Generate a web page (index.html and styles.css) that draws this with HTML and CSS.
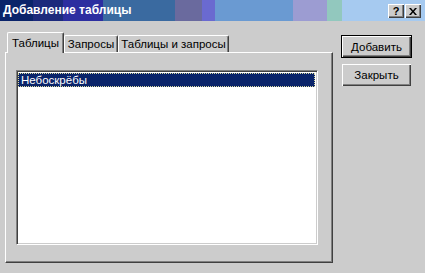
FILE: index.html
```html
<!DOCTYPE html>
<html lang="ru">
<head>
    <meta charset="UTF-8">
    <title>Добавление таблицы</title>
    <link rel="stylesheet" href="styles.css">
</head>
<body>
    <div class="window">
        <div class="titlebar">
            <span class="title">Добавление таблицы</span>
            <div class="caption-buttons">
                <span class="cap-btn help">?</span>
                <span class="cap-btn close">
                    <svg width="8" height="7" viewBox="0 0 8 7">
                        <path d="M0 0h2l2 2.5L6 0h2L5 3.5 8 7H6L4 4.5 2 7H0l3-3.5z" fill="#000"/>
                    </svg>
                </span>
            </div>
        </div>
        <div class="client">
            <div class="tabctl">
                <div class="tabs">
                    <div class="tab selected">Таблицы</div>
                    <div class="tab t2">Запросы</div>
                    <div class="tab t3">Таблицы и запросы</div>
                </div>
                <div class="panel">
                    <div class="listbox">
                        <div class="item focused">Небоскрёбы</div>
                    </div>
                </div>
            </div>
            <div class="actions">
                <button class="btn default">Добавить</button>
                <button class="btn secondary">Закрыть</button>
            </div>
        </div>
    </div>
</body>
</html>
```

FILE: styles.css
```css
body {
    margin: 0;
    width: 425px;
    height: 273px;
    overflow: hidden;
    background-color: #cccccc;
    font-family: "Liberation Sans", Arial, sans-serif;
    font-size: 11.5px;
    color: #000;
}
.titlebar {
    height: 21px;
    display: flex;
    align-items: center;
    padding-left: 3px;
    background: linear-gradient(to right,
        #0a246a 0, #0a246a 33px,
        #1c2a7c 33px, #1c2a7c 63px,
        #2c2ea0 63px, #2c2ea0 103px,
        #3a6aa0 103px, #3a6aa0 175px,
        #6a6a9e 175px, #6a6a9e 202px,
        #6a6ad0 202px, #6a6ad0 215px,
        #6a9ad2 215px, #6a9ad2 293px,
        #9c9cd2 293px, #9c9cd2 327px,
        #92c8be 327px, #92c8be 342px,
        #a6caf0 342px);
}
.title {
    color: #fff;
    font-weight: bold;
    font-size: 12px;
    padding-bottom: 1px;
}
.caption-buttons {
    margin-left: auto;
    display: flex;
    gap: 1px;
    padding-right: 4px;
    padding-top: 1px;
}
.cap-btn {
    width: 16px;
    height: 14px;
    box-sizing: border-box;
    display: flex;
    align-items: center;
    justify-content: center;
    background-color: #cccccc;
    box-shadow: inset 1px 1px #fff, inset -1px -1px #404040, inset -2px -2px #808080;
    font-weight: bold;
    font-size: 11px;
    line-height: 14px;
}
.client {
    display: flex;
    padding: 11px 0 0 5px;
}
.tabctl {
    width: 328px;
}
.tabs {
    display: flex;
    align-items: flex-end;
    height: 20px;
    padding-left: 2px;
    position: relative;
    z-index: 1;
}
.tab {
    box-sizing: border-box;
    height: 17px;
    border: 1px solid;
    border-color: #fff #404040 transparent #fff;
    border-bottom: none;
    border-radius: 2px 2px 0 0;
    box-shadow: inset -1px 0 #808080;
    background-color: #cccccc;
    display: flex;
    align-items: center;
    justify-content: center;
}
.tab.selected {
    width: 57px;
    height: 21px;
    margin-bottom: -1px;
    padding-bottom: 1px;
}
.tab.t2 {
    width: 54px;
}
.tab.t3 {
    width: 111px;
}
.panel {
    box-sizing: border-box;
    height: 211px;
    border: 1px solid;
    border-color: #fff #404040 #404040 #fff;
    box-shadow: inset -1px -1px #808080;
    padding: 17px 0 0 10px;
}
.listbox {
    box-sizing: border-box;
    width: 302px;
    height: 175px;
    background-color: #fff;
    border: 1px solid;
    border-color: #808080 #fff #fff #808080;
    box-shadow: inset 1px 1px #404040, inset -1px -1px #cccccc;
    padding: 2px 2px 0 1px;
}
.item {
    height: 14px;
    line-height: 14px;
    padding-left: 3px;
}
.item.focused {
    background-color: #0a246a;
    color: #fff;
    outline: 1px dotted #d8d8a0;
    outline-offset: -1px;
}
.actions {
    display: flex;
    flex-direction: column;
    align-items: flex-start;
    margin-left: 8px;
    padding-top: 3px;
}
.btn {
    font-family: inherit;
    font-size: 11.5px;
    color: #000;
    background-color: #cccccc;
    border: none;
    padding: 0;
    margin: 0;
}
.btn.default {
    width: 71px;
    height: 23px;
    border: 1px solid #000;
    box-shadow: inset 1px 1px #fff, inset -1px -1px #404040, inset -2px -2px #808080;
}
.btn.secondary {
    width: 69px;
    height: 22px;
    margin: 6px 0 0 1px;
    box-shadow: inset 1px 1px #fff, inset -1px -1px #404040, inset -2px -2px #808080;
}
```
